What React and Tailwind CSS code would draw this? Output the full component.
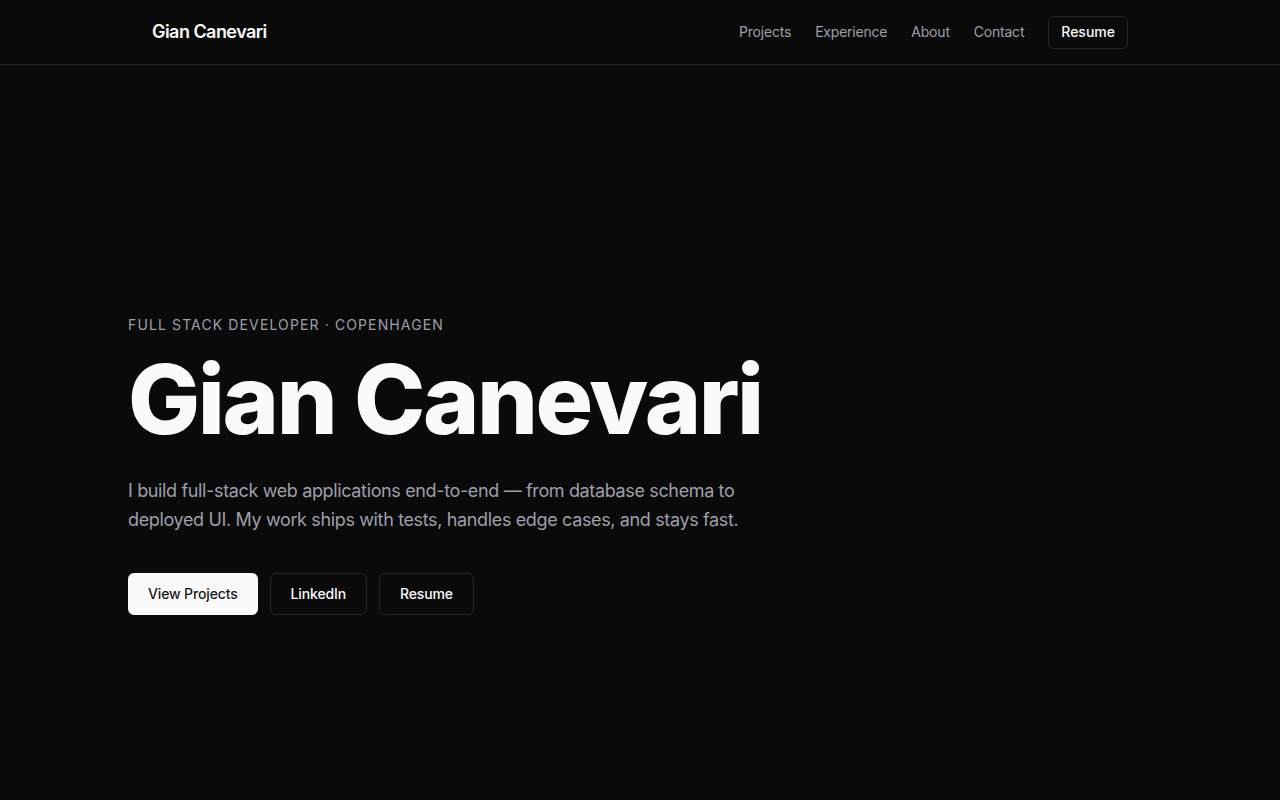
export default function App() {
  const navLinks = ['Projects', 'Experience', 'About', 'Contact'];

  return (
    <div className="min-h-screen bg-[#0a0a0b] text-zinc-50" style={{ fontFamily: 'Inter, "Noto Sans", sans-serif' }}>
      <header className="border-b border-[#27272a]">
        <div className="max-w-5xl mx-auto px-6 h-16 flex items-center justify-between">
          <a className="text-lg font-semibold tracking-[-0.03em] text-zinc-50">Gian Canevari</a>
          <nav className="flex items-center gap-6">
            {navLinks.map(link => (
              <a key={link} className="text-sm tracking-[-0.015em] text-zinc-400">{link}</a>
            ))}
            <a className="h-[33px] flex items-center text-sm font-medium text-zinc-50 border border-[#27272a] rounded-md px-3">Resume</a>
          </nav>
        </div>
      </header>

      <main className="max-w-6xl mx-auto px-16 pt-[250px] pb-40">
        <p className="text-sm uppercase tracking-[0.08em] text-zinc-400">Full Stack Developer · Copenhagen</p>
        <h1 className="mt-4 text-8xl font-extrabold tracking-tight text-zinc-50 leading-none">Gian Canevari</h1>
        <p className="mt-[29px] max-w-2xl text-lg leading-[29px] tracking-[-0.02em] text-zinc-400">
          I build full-stack web applications end-to-end — from database schema to deployed UI. My work ships with tests, handles edge cases, and stays fast.
        </p>
        <div className="mt-[39px] flex gap-3">
          <a className="h-[42px] px-5 flex items-center rounded-md bg-zinc-50 text-zinc-900 text-sm font-medium tracking-[-0.01em]">View Projects</a>
          <a className="h-[42px] px-5 flex items-center rounded-md border border-[#27272a] text-zinc-50 text-sm font-medium tracking-[-0.01em]">LinkedIn</a>
          <a className="h-[42px] px-5 flex items-center rounded-md border border-[#27272a] text-zinc-50 text-sm font-medium tracking-[-0.01em]">Resume</a>
        </div>
      </main>
    </div>
  );
}
